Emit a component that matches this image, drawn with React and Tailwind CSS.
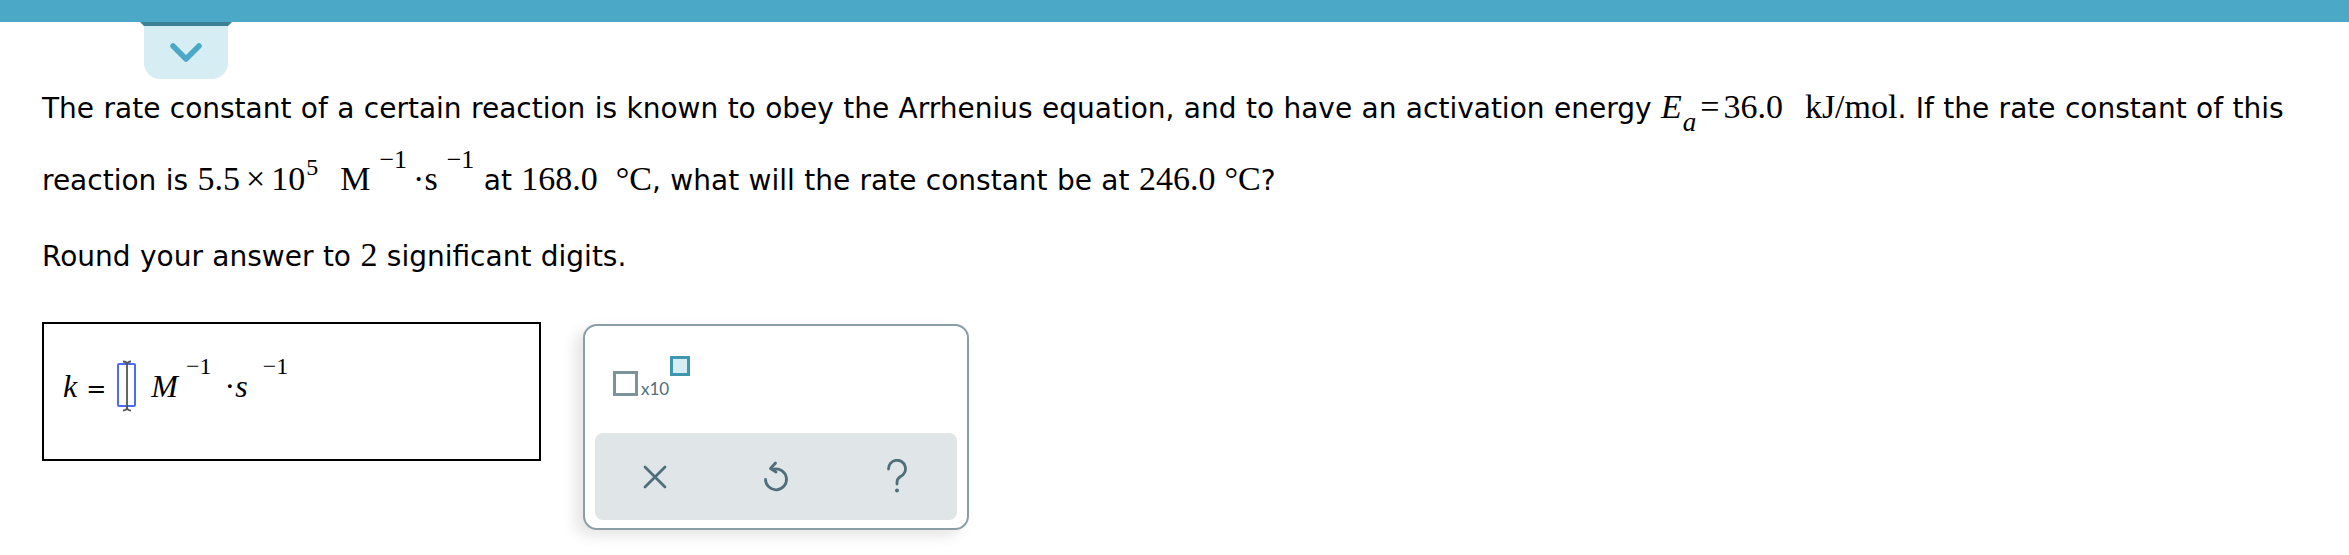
import React from 'react';

const serif = "font-['Liberation_Serif',serif]";

function Chevron() {
  return (
    <svg width="34" height="22" viewBox="0 0 34 22" fill="none">
      <polyline points="4,4 17,17 30,4" stroke="#4BA8C6" strokeWidth="5.5" strokeLinecap="round" strokeLinejoin="round" />
    </svg>
  );
}

function IBeam() {
  return (
    <svg className="absolute left-1/2 -top-[5px] -translate-x-1/2" width="12" height="52" viewBox="0 0 12 52" fill="none">
      <path d="M2 1.5 Q6 1.5 6 5 Q6 1.5 10 1.5 M6 5 V47 M2 50.5 Q6 50.5 6 47 Q6 50.5 10 50.5" stroke="#555" strokeWidth="1.8" />
    </svg>
  );
}

function XIcon() {
  return (
    <svg width="26" height="26" viewBox="0 0 26 26" fill="none">
      <path d="M3 3 L23 23 M23 3 L3 23" stroke="#4E6E79" strokeWidth="2.8" strokeLinecap="round" />
    </svg>
  );
}

function UndoIcon() {
  return (
    <svg width="30" height="34" viewBox="0 0 30 34" fill="none">
      <path d="M13 9 A10.5 10.5 0 1 1 4.5 19.5" stroke="#4E6E79" strokeWidth="2.8" strokeLinecap="round" />
      <path d="M14.5 3 L9.5 8.5 L15 12" stroke="#4E6E79" strokeWidth="2.8" strokeLinecap="round" strokeLinejoin="round" />
    </svg>
  );
}

function HelpIcon() {
  return (
    <svg width="26" height="36" viewBox="0 0 26 36" fill="none">
      <path d="M4.5 10 A8.5 8.5 0 1 1 16.5 17.5 C14 19 13 20.5 13 23.5 V25" stroke="#4E6E79" strokeWidth="2.8" strokeLinecap="round" />
      <circle cx="13" cy="31.5" r="2" fill="#4E6E79" />
    </svg>
  );
}

export default function App() {
  return (
    <div className="w-[2349px] h-[555px] bg-white overflow-hidden text-black">
      {/* top bar with drawer tab */}
      <div className="relative h-[22px] bg-[#4BA8C6]">
        <div className="absolute left-[140px] top-full flex flex-col items-center">
          <svg width="92" height="4" viewBox="0 0 92 4">
            <polygon points="0,0 92,0 88,4 4,4" fill="#3A7F93" />
          </svg>
          <div className="w-[84px] h-[53px] rounded-b-[16px] bg-[#D5EDF3] flex items-center justify-center">
            <Chevron />
          </div>
        </div>
      </div>

      <div className="pl-[42px] pt-[51px] font-['DejaVu_Sans',sans-serif] text-[28px] [word-spacing:0.5px]">
        {/* line 1 */}
        <div className="whitespace-nowrap h-[72px] leading-[72px]">
          The rate constant of a certain reaction is known to obey the Arrhenius equation, and to have an activation energy{' '}
          <span className={`${serif} text-[34px] leading-none [word-spacing:0]`}>
            <span className="italic">E</span>
            <span className="italic text-[27px] align-[-13px] ml-[1px]">a</span>
            <span className="mx-[4px]">=</span>
            <span>36.0</span>
            <span className="ml-[22px]">kJ/mol</span>
          </span>
          . If the rate constant of this
        </div>

        {/* line 2 */}
        <div className="whitespace-nowrap h-[72px] leading-[72px]">
          reaction is{' '}
          <span className={`${serif} text-[34px] leading-none [word-spacing:0]`}>
            5.5<span className="mx-[6px]">×</span>10
            <span className="text-[24px] align-[15px] ml-[1px]">5</span>
            <span className="ml-[22px]">M</span>
            <span className="text-[26px] align-[22px] ml-[9px]">−1</span>
            <span className="ml-[6px]">·s</span>
            <span className="text-[26px] align-[22px] ml-[9px]">−1</span>
          </span>{' '}
          at{' '}
          <span className={`${serif} text-[34px] leading-none`}>168.0&nbsp;&nbsp;°C</span>, what will the rate constant be at{' '}
          <span className={`${serif} text-[34px] leading-none`}>246.0&nbsp;°C</span>?
        </div>

        {/* line 3 */}
        <div className="whitespace-nowrap h-[72px] leading-[72px] mt-[4px]">
          Round your answer to <span className={`${serif} text-[34px] leading-none`}>2</span> significant digits.
        </div>

        {/* answer row */}
        <div className="flex items-start gap-[42px] mt-[29px] [word-spacing:0]">
          <div className={`w-[499px] h-[139px] border-2 border-black pl-[19px] pt-[30px] ${serif} text-[32px]`}>
            <div className="whitespace-nowrap leading-[60px] h-[60px]">
              <span className="italic">k</span>
              <span className="ml-[9px] mr-[11px] font-['DejaVu_Sans',sans-serif] text-[24px]">=</span>
              <span className="relative inline-block w-[19px] h-[44px] border-2 border-[#4D6BF3] rounded-[2px] align-[-10px]">
                <IBeam />
              </span>
              <span className="italic ml-[15px] leading-none">M</span>
              <span className="text-[24px] align-[23px] ml-[8px] leading-none">−1</span>
              <span className="ml-[13px] leading-none">·</span>
              <span className="italic leading-none">s</span>
              <span className="text-[24px] align-[23px] ml-[15px] leading-none">−1</span>
            </div>
          </div>

          {/* keypad */}
          <div className="mt-[2px] w-[386px] h-[206px] rounded-[14px] border-2 border-[#8A9EA6] bg-white shadow-[-8px_6px_14px_rgba(0,0,0,0.10)] flex flex-col">
            <div className="flex-1 pl-[28px] pt-[30px]">
              <div className="flex items-start">
                <div className="mt-[15px] w-[25px] h-[25px] border-[3px] border-[#7B939B]" />
                <span className="mt-[24px] ml-[3px] font-['Lato',sans-serif] text-[17px] leading-none text-[#4F6E78]">x10</span>
                <div className="ml-[1px] w-[20px] h-[20px] border-[3px] border-[#3E96B1] bg-[#D5EDF3]" />
              </div>
            </div>
            <div className="mx-[10px] mb-[8px] h-[87px] rounded-[8px] bg-[#E0E5E8] grid grid-cols-3 items-center justify-items-center">
              <XIcon />
              <UndoIcon />
              <HelpIcon />
            </div>
          </div>
        </div>
      </div>
    </div>
  );
}
